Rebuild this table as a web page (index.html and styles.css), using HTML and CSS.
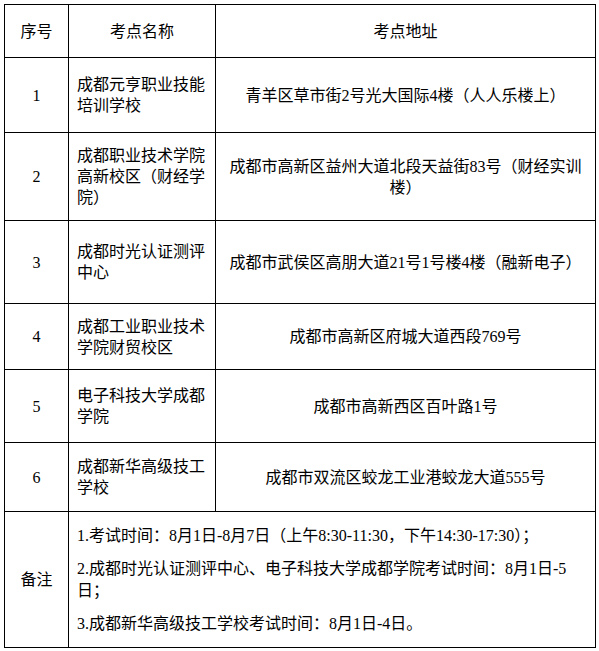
FILE: index.html
```html
<!DOCTYPE html>
<html lang="zh-CN">
<head>
<meta charset="utf-8">
<title>考点信息</title>
<link rel="stylesheet" href="styles.css">
</head>
<body>
<div class="page">
  <table class="sites">
    <colgroup>
      <col class="c-no">
      <col class="c-name">
      <col class="c-addr">
    </colgroup>
    <tbody>
      <tr class="r-head">
        <td class="center">序号</td>
        <td class="center">考点名称</td>
        <td class="center">考点地址</td>
      </tr>
      <tr class="r1">
        <td class="center">1</td>
        <td>成都元亨职业技能培训学校</td>
        <td class="center">青羊区草市街2号光大国际4楼（人人乐楼上）</td>
      </tr>
      <tr class="r2">
        <td class="center">2</td>
        <td>成都职业技术学院高新校区（财经学院）</td>
        <td class="center">成都市高新区益州大道北段天益街83号（财经实训楼）</td>
      </tr>
      <tr class="r3">
        <td class="center">3</td>
        <td>成都时光认证测评中心</td>
        <td class="center">成都市武侯区高朋大道21号1号楼4楼（融新电子）</td>
      </tr>
      <tr class="r4">
        <td class="center">4</td>
        <td>成都工业职业技术学院财贸校区</td>
        <td class="center">成都市高新区府城大道西段769号</td>
      </tr>
      <tr class="r5">
        <td class="center">5</td>
        <td>电子科技大学成都学院</td>
        <td class="center">成都市高新西区百叶路1号</td>
      </tr>
      <tr class="r6">
        <td class="center">6</td>
        <td>成都新华高级技工学校</td>
        <td class="center">成都市双流区蛟龙工业港蛟龙大道555号</td>
      </tr>
      <tr class="r-notes">
        <td class="center">备注</td>
        <td class="notes" colspan="2">
          <p>1.考试时间：8月1日-8月7日（上午8:30-11:30，下午14:30-17:30）；</p>
          <p>2.成都时光认证测评中心、电子科技大学成都学院考试时间：8月1日-5日；</p>
          <p>3.成都新华高级技工学校考试时间：8月1日-4日。</p>
        </td>
      </tr>
    </tbody>
  </table>
</div>
</body>
</html>
```
FILE: styles.css
```css
html, body {
  margin: 0;
  padding: 0;
  background: #ffffff;
}

.page {
  padding: 4px 0 0 4px;
}

.sites {
  border-collapse: collapse;
  table-layout: fixed;
  width: 591px;
  font-family: "Liberation Serif", "Noto Sans CJK SC", serif;
  font-size: 16px;
  line-height: 21px;
  color: #000000;
}

.c-no { width: 64px; }
.c-name { width: 147px; }
.c-addr { width: 380px; }

.sites td {
  border: 1px solid #000000;
  padding: 0 8px;
  vertical-align: middle;
  text-align: left;
}

.sites td.center {
  text-align: center;
}

.r-head { height: 53px; }
.r1 { height: 75px; }
.r2 { height: 88px; }
.r3 { height: 83px; }
.r4 { height: 66px; }
.r5 { height: 73px; }
.r6 { height: 69px; }
.r-notes { height: 136px; }

.sites td.notes {
  padding: 0 18px 0 8px;
  line-height: 22px;
}

.notes p {
  margin: 11px 0;
}
```
